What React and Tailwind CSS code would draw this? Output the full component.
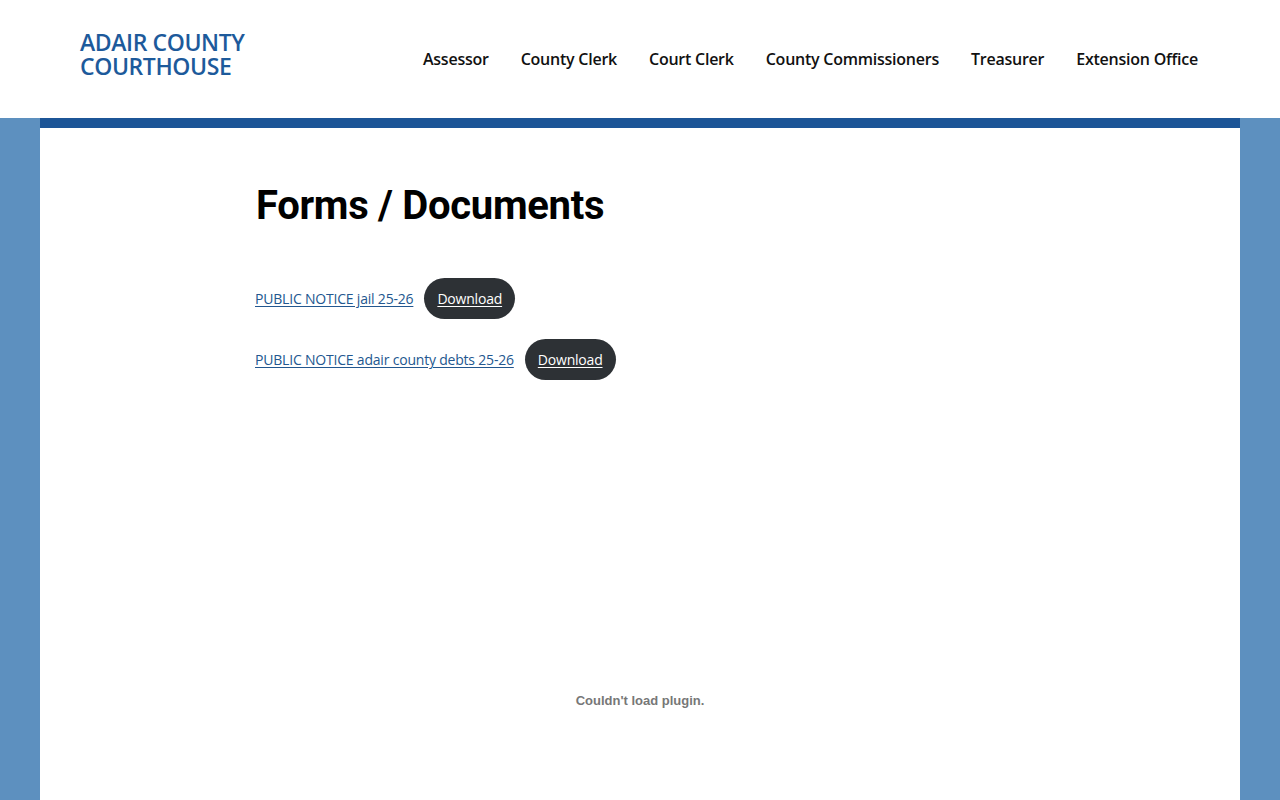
const navItems = ['Assessor', 'County Clerk', 'Court Clerk', 'County Commissioners', 'Treasurer', 'Extension Office'];

const docs = [
  { name: 'PUBLIC NOTICE jail 25-26' },
  { name: 'PUBLIC NOTICE adair county debts 25-26' },
];

export default function App() {
  return (
    <div className="min-h-screen bg-[#5d90bf] font-['Open_Sans',sans-serif]">
      <header className="bg-white">
        <div className="flex items-center justify-between h-[118px] pl-[80px] pr-[82px]">
          <a href="#" className="text-[#1d5a9b] font-semibold text-[23px] leading-[24px] tracking-[-0.4px] -mt-[10px]">
            ADAIR COUNTY
            <br />
            COURTHOUSE
          </a>
          <nav className="flex items-center gap-[32px] text-[16px] font-semibold text-[#111] tracking-[-0.24px]">
            {navItems.map((item) => (
              <a key={item} href="#">{item}</a>
            ))}
          </nav>
        </div>
      </header>
      <main className="mx-[40px] bg-white border-t-[10px] border-[#1c5597] h-[682px] flex flex-col">
        <div className="pl-[216px] pt-[54px]">
          <h1 className="font-['Roboto',sans-serif] font-bold text-[40px] leading-[48px] text-black tracking-[-0.3px]">
            Forms / Documents
          </h1>
          <div className="mt-[48px] flex flex-col gap-[20px]">
            {docs.map((d) => (
              <div key={d.name} className="flex items-center gap-[11px]">
                <a href="#" className="text-[14px] text-[#23578f] underline underline-offset-2 tracking-[-0.2px] -ml-px">
                  {d.name}
                </a>
                <a href="#" className="h-[41px] px-[13px] rounded-full bg-[#2d3135] text-white text-[14px] underline underline-offset-2 flex items-center tracking-[-0.2px]">
                  Download
                </a>
              </div>
            ))}
          </div>
        </div>
        <div className="flex-1 flex items-end justify-center pb-[90px]">
          <span className="font-['Liberation_Sans',Arial,sans-serif] font-bold text-[13px] text-[#777]">
            Couldn't load plugin.
          </span>
        </div>
      </main>
    </div>
  );
}
